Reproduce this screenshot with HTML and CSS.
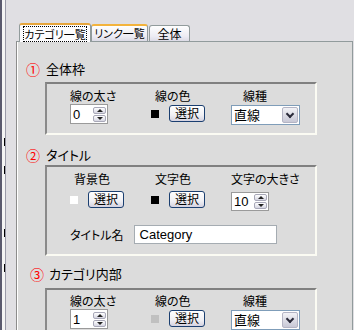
FILE: index.html
```html
<!DOCTYPE html>
<html lang="ja">
<head>
    <meta charset="UTF-8">
    <title>設定</title>
    <link rel="stylesheet" href="styles.css">
</head>
<body>
    <div class="side">
        <i class="mark m1"></i><i class="mark m2"></i><i class="mark m3"></i><i class="mark m4"></i>
    </div>

    <div class="main">
        <div class="tabs">
            <div class="tab active"><span class="focus">カテゴリ一覧</span></div>
            <div class="tab hover">リンク一覧</div>
            <div class="tab last">全体</div>
        </div>

        <div class="panel">
            <!-- ① 全体枠 -->
            <div class="heading h1">
                <span class="num">①</span><span class="title">全体枠</span>
            </div>
            <div class="group g1">
                <div class="row">
                    <div class="field c1">
                        <label>線の太さ</label>
                        <div class="spinner"><span class="val">0</span><span class="spin"><i class="up"></i><i class="down"></i></span></div>
                    </div>
                    <div class="field c2">
                        <label class="ind4">線の色</label>
                        <div class="color"><span class="swatch black"></span><button class="btn">選択</button></div>
                    </div>
                    <div class="field">
                        <label class="ind12">線種</label>
                        <div class="select"><span class="val">直線</span><span class="arrow"></span></div>
                    </div>
                </div>
            </div>

            <!-- ② タイトル -->
            <div class="heading h2">
                <span class="num">②</span><span class="title">タイトル</span>
            </div>
            <div class="group g2">
                <div class="row">
                    <div class="field c1">
                        <label class="ind4">背景色</label>
                        <div class="color"><span class="swatch white"></span><button class="btn">選択</button></div>
                    </div>
                    <div class="field c2">
                        <label class="ind4">文字色</label>
                        <div class="color"><span class="swatch black"></span><button class="btn">選択</button></div>
                    </div>
                    <div class="field">
                        <label>文字の大きさ</label>
                        <div class="spinner"><span class="val">10</span><span class="spin"><i class="up"></i><i class="down"></i></span></div>
                    </div>
                </div>
                <div class="name-row">
                    <label>タイトル名</label>
                    <div class="text">Category</div>
                </div>
            </div>

            <!-- ③ カテゴリ内部 -->
            <div class="heading h3">
                <span class="num">③</span><span class="title">カテゴリ内部</span>
            </div>
            <div class="group g3">
                <div class="row">
                    <div class="field c1">
                        <label>線の太さ</label>
                        <div class="spinner"><span class="val">1</span><span class="spin"><i class="up"></i><i class="down"></i></span></div>
                    </div>
                    <div class="field c2">
                        <label class="ind4">線の色</label>
                        <div class="color"><span class="swatch gray"></span><button class="btn">選択</button></div>
                    </div>
                    <div class="field">
                        <label class="ind12">線種</label>
                        <div class="select"><span class="val">直線</span><span class="arrow"></span></div>
                    </div>
                </div>
            </div>
        </div>
    </div>
</body>
</html>
```

FILE: styles.css
```css
:root {
    --window-bg: #e0dfe3;
    --panel-bg: #dcdcdc;
    --tab-border: #919b9c;
    --field-border: #7f9db9;
    --text-color: #000;
}

* {
    box-sizing: border-box;
}

body {
    margin: 0;
    width: 354px;
    height: 330px;
    overflow: hidden;
    display: flex;
    background-color: var(--window-bg);
    color: var(--text-color);
    font-family: "Noto Sans CJK JP", "Liberation Sans", sans-serif;
    font-size: 12px;
    font-feature-settings: "palt";
}

/* edge of the neighbouring pane */
.side {
    width: 6px;
    flex: none;
    display: flex;
    flex-direction: column;
    align-items: flex-end;
    background: #f4f4f4;
    border-left: 2px solid #5a5a6e;
    border-right: 1px solid #9a9aa8;
    overflow: hidden;
}

.mark {
    display: block;
    width: 1px;
    height: 8px;
    background: #000;
}

.m1 {
    margin-top: 138px;
}

.m2 {
    margin-top: 20px;
}

.m3 {
    margin-top: 55px;
}

.m4 {
    margin-top: 27px;
}

.main {
    flex: 1;
    padding: 22px 1px 0 11px;
}

/* tabs */
.tabs {
    display: flex;
    align-items: flex-end;
    height: 19px;
    padding-left: 2px;
}

.tab {
    height: 17px;
    width: 57px;
    line-height: 15px;
    text-align: center;
    white-space: nowrap;
    border: 1px solid var(--tab-border);
    border-bottom: none;
    border-radius: 3px 3px 0 0;
    background: linear-gradient(#fefefe, #ecebf3 70%, #dcdbe6);
    font-size: 11px;
}

.tab.hover {
    border-top: 2px solid #f3b33c;
}

.tab.last {
    width: 41px;
    height: 16px;
    margin-left: 1px;
    font-size: 12px;
}

.tab.active {
    height: 19px;
    width: 72px;
    border-top: 2px solid #e6a53c;
    background: #fcfcfe;
    padding: 1px 3px 0;
    position: relative;
    z-index: 1;
    margin-bottom: -1px;
}

.focus {
    display: block;
    border: 1px dotted #000;
    line-height: 14px;
}

/* panel */
.panel {
    height: 289px;
    margin-left: -1px;
    border: 1px solid var(--tab-border);
    border-left: 1px solid #8c8c8c;
    box-shadow: inset 1px 0 0 #fff;
    border-bottom: none;
    background-color: var(--panel-bg);
    padding: 20px 0 0 9px;
    overflow: hidden;
}

.heading {
    display: flex;
    align-items: center;
    height: 15px;
    gap: 7px;
}

.num {
    color: #ff0000;
    font-size: 14px;
    width: 13px;
}

.title {
    font-size: 13px;
}

.h1 {
    margin-top: -1px;
}

.h2 {
    margin-top: 12px;
}

.h3 {
    margin-top: 10px;
    padding-left: 4px;
    gap: 6px;
}

.group {
    width: 272px;
    margin-left: 19px;
    border: 2px solid;
    border-color: #808080 #fbfbf3 #fbfbf3 #8a8a8a;
    padding: 4px 0 8px 23px;
}

.g1 {
    margin-top: 6px;
}

.g2 {
    margin-top: 3px;
    padding-bottom: 10px;
}

.g3 {
    margin-top: 7px;
    height: 60px;
    padding-top: 3px;
}

.row {
    display: flex;
}

.field {
    display: flex;
    flex-direction: column;
}

.field label {
    line-height: 15px;
    height: 16px;
}

.c1 {
    width: 81px;
}

.c2 {
    width: 80px;
}

.ind4 {
    padding-left: 4px;
}

.ind12 {
    padding-left: 12px;
}

.g2 .field label {
    height: 19px;
}

/* spinner */
.spinner {
    display: flex;
    align-items: center;
    justify-content: space-between;
    width: 38px;
    height: 20px;
    border: 1px solid #9a9a9a;
    background: #fff;
    padding: 0 1px 0 2px;
    font-family: "Liberation Sans", sans-serif;
    font-size: 13px;
}

.g2 .spinner {
    height: 19px;
    margin-top: 2px;
}

.spin {
    display: flex;
    flex-direction: column;
    gap: 1px;
}

.spin i {
    position: relative;
    display: block;
    width: 13px;
    height: 7px;
    border: 1px solid #a8a8b8;
    border-radius: 2px;
    background: linear-gradient(#ffffff, #d6d6e2);
}

.spin i::after {
    content: "";
    position: absolute;
    left: 3px;
    border-left: 3px solid transparent;
    border-right: 3px solid transparent;
}

.spin .up::after {
    top: 1px;
    border-bottom: 3px solid #222;
}

.spin .down::after {
    top: 1px;
    border-top: 3px solid #222;
}

/* colour swatch and button */
.color {
    display: flex;
    align-items: center;
    height: 18px;
    gap: 10px;
}

.swatch {
    width: 8px;
    height: 8px;
    margin-top: 2px;
}

.swatch.black {
    background: #000;
}

.swatch.white {
    background: #fff;
}

.swatch.gray {
    background: #c0c0c0;
}

.btn {
    width: 36px;
    height: 17px;
    padding: 0;
    border: 1px solid #1b3f70;
    border-radius: 3px;
    background: linear-gradient(#ffffff, #f0f0f4 60%, #d4d2e0);
    font: inherit;
    font-size: 12px;
    line-height: 14px;
    color: #000;
}

/* combo box */
.select {
    display: flex;
    align-items: center;
    justify-content: space-between;
    width: 69px;
    height: 20px;
    margin-top: 1px;
    border: 1px solid var(--field-border);
    background: #fff;
    padding: 0 1px 0 2px;
    font-size: 13px;
    line-height: 16px;
}

.arrow {
    position: relative;
    width: 16px;
    height: 16px;
    border: 1px solid #b4b4c4;
    border-radius: 2px;
    background: linear-gradient(#f2f2f6, #c8c8d6);
}

.arrow::after {
    content: "";
    position: absolute;
    left: 4px;
    top: 3px;
    width: 4px;
    height: 4px;
    border-right: 2px solid #2a2a3a;
    border-bottom: 2px solid #2a2a3a;
    transform: rotate(45deg);
}

/* title name row */
.name-row {
    display: flex;
    align-items: center;
    margin-top: 14px;
    gap: 10px;
}

.text {
    width: 143px;
    height: 19px;
    border: 1px solid #a5acb2;
    background: #fff;
    padding: 0 5px;
    line-height: 17px;
    font-family: "Liberation Sans", sans-serif;
    font-size: 13px;
}
```
